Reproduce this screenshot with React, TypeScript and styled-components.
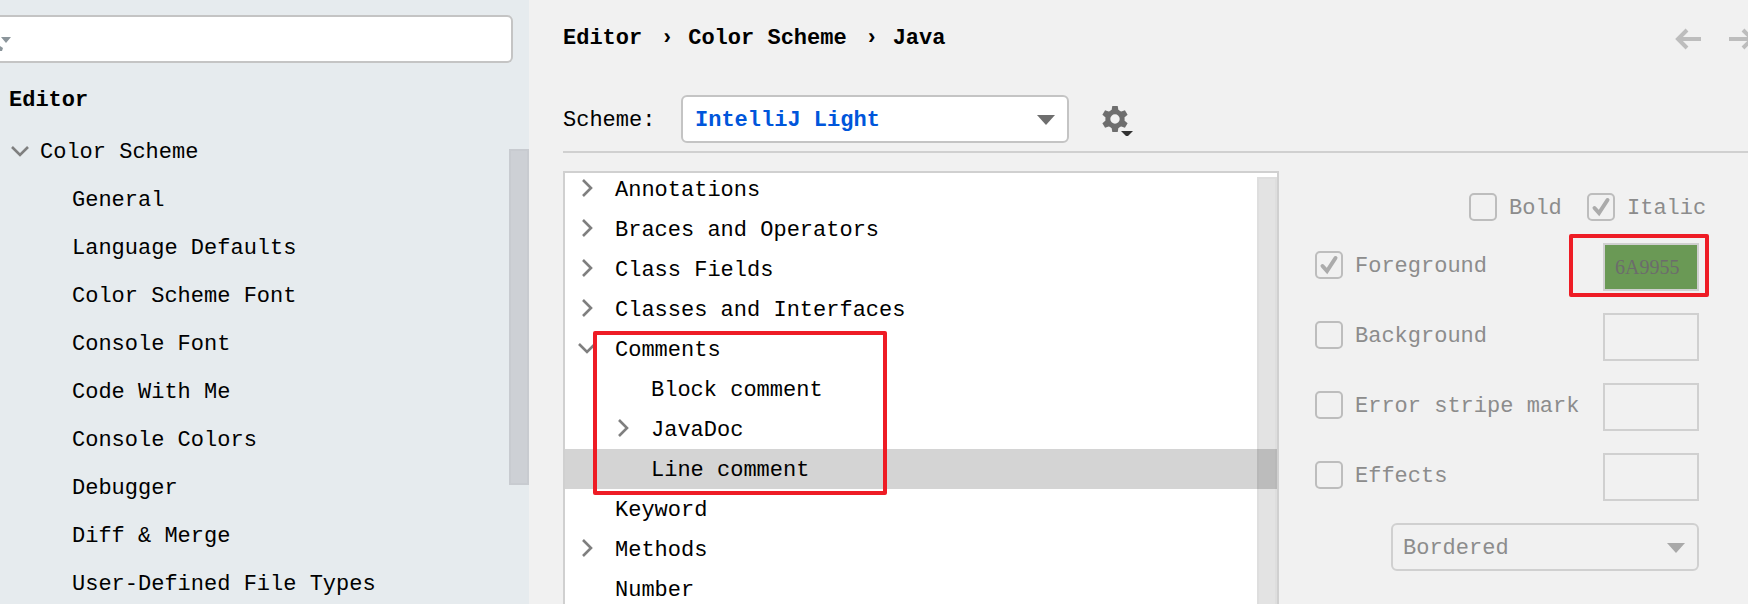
import React from "react";
import styled, { createGlobalStyle, css } from "styled-components";

const GlobalStyle = createGlobalStyle`
  *, *::before, *::after { box-sizing: border-box; }
  body {
    margin: 0;
    background: #f1f1f1;
    color: #000;
    font-family: "Liberation Mono", monospace;
    font-size: 22px;
    line-height: 28px;
  }
  button, input, select { font: inherit; color: inherit; }
`;

const Shell = styled.div`
  display: flex;
  height: 100vh;
  overflow: hidden;
`;

const Sidebar = styled.aside`
  flex: 0 0 529px;
  padding-top: 15px;
  background: #e6ebee;
  overflow: hidden;
`;

const SearchBox = styled.div`
  position: relative;
  margin-right: 16px;
`;

const SearchInput = styled.input`
  display: block;
  width: 100%;
  height: 48px;
  padding: 0 20px;
  border: 2px solid #c4c4c4;
  border-left: 0;
  border-radius: 0 6px 6px 0;
  background: #fff;
  outline: none;
`;

const SearchGlyph = styled.svg`
  position: absolute;
  left: 0;
  top: 20px;
`;

const SidebarHeading = styled.h2`
  margin: 14px 0 4px;
  padding-left: 9px;
  font-size: 22px;
  line-height: 48px;
`;

const SidebarTree = styled.nav`
  position: relative;
`;

const Thumb = styled.span`
  position: absolute;
  right: 0;
  top: 20px;
  width: 20px;
  height: 336px;
  border: 2px solid #c8cbd0;
  background: #cdd0d5;
`;

const SidebarItem = styled.button<{ $child?: boolean }>`
  display: flex;
  align-items: center;
  width: 100%;
  height: 48px;
  padding: 0 0 0 ${(p) => (p.$child ? 72 : 8)}px;
  border: 0;
  background: none;
  text-align: left;
  white-space: nowrap;
`;

const ChevronSvg = styled.svg`
  flex: none;
  width: 24px;
  height: 24px;
  margin-right: 8px;
`;

const Main = styled.main`
  flex: 1;
  min-width: 0;
  display: flex;
  flex-direction: column;
  padding: 25px 0 0 34px;
`;

const Header = styled.header`
  display: flex;
  justify-content: space-between;
  font-weight: bold;
`;

const Crumbs = styled.nav`
  display: flex;
  white-space: pre;
`;

const Separator = styled.span`
  width: 46px;
  padding-left: 4px;
  text-align: center;
`;

const History = styled.div`
  display: flex;
  align-items: center;
  gap: 28px;
  width: 73px;
  overflow: hidden;
`;

const IconButton = styled.button`
  flex: none;
  display: flex;
  padding: 0;
  border: 0;
  background: none;
`;

const SchemeRow = styled.div`
  display: flex;
  align-items: center;
  margin-top: 42px;
  padding-bottom: 8px;
  border-bottom: 2px solid #d0d0d0;
`;

const SchemeLabel = styled.label`
  width: 118px;
  padding-top: 4px;
`;

const SelectBox = styled.div<{ $width: number }>`
  position: relative;
  width: ${(p) => p.$width}px;
`;

const Select = styled.select`
  display: block;
  appearance: none;
  width: 100%;
  height: 48px;
  padding: 4px 48px 0 12px;
  border: 2px solid #c4c4c4;
  border-radius: 6px;
  background: #fff;
  color: #0056db;
  font-weight: bold;
  outline: none;
  &:disabled {
    padding-left: 10px;
    border-color: #d0d0d0;
    background: #f1f1f1;
    color: #8c8c8c;
    font-weight: normal;
    opacity: 1;
  }
`;

const SelectArrow = styled.svg`
  position: absolute;
  right: 14px;
  top: 20px;
  pointer-events: none;
`;

const GearButton = styled(IconButton)`
  margin-left: 32px;
`;

const Body = styled.div`
  flex: 1;
  min-height: 0;
  display: flex;
  align-items: stretch;
  margin-top: 18px;
`;

const TreePanel = styled.section`
  position: relative;
  flex: 1;
  min-width: 0;
  border: 2px solid #d0d0d0;
  border-bottom: 0;
  background: #fff;
  overflow: hidden;
`;

const TreeRows = styled.div`
  margin-top: -4px;
`;

const TreeGroup = styled.div`
  position: relative;
`;

const TreeItem = styled.button<{ $level: number; $selected: boolean }>`
  display: flex;
  align-items: center;
  width: 100%;
  height: 40px;
  padding: 4px 0 0 ${(p) => 10 + p.$level * 36}px;
  border: 0;
  background: ${(p) => (p.$selected ? "#d4d4d4" : "transparent")};
  text-align: left;
  white-space: nowrap;
`;

const ChevronSlot = styled.span`
  flex: none;
  display: flex;
  width: 40px;
  padding-bottom: 2px;
`;

const TreeScrollbar = styled.span`
  position: absolute;
  top: 4px;
  right: 0;
  bottom: 0;
  width: 20px;
  border: solid rgba(0, 0, 0, 0.02);
  border-width: 2px 2px 0 2px;
  background: rgba(0, 0, 0, 0.11);
`;

const marker = css`
  position: absolute;
  border: 4px solid #ee1c25;
  border-radius: 2px;
  pointer-events: none;
`;

const GroupMarker = styled.span`
  ${marker}
  left: 28px;
  top: 2px;
  width: 294px;
  bottom: -6px;
`;

const SwatchMarker = styled.span`
  ${marker}
  left: -34px;
  top: -9px;
  width: 140px;
  height: 63px;
`;

const Options = styled.form`
  flex: none;
  width: 384px;
  margin: 22px 49px 0 36px;
  color: #8c8c8c;
`;

const StyleRow = styled.div`
  display: flex;
  margin: 0 0 22px 154px;
`;

const OptionRow = styled.div`
  display: flex;
  justify-content: space-between;
  align-items: flex-start;
  height: 48px;
  margin-bottom: 22px;
`;

const CheckLabel = styled.label<{ $width?: number }>`
  flex: none;
  display: flex;
  align-items: center;
  gap: 12px;
  width: ${(p) => (p.$width ? `${p.$width}px` : "auto")};
  white-space: nowrap;
`;

const OptionLabel = styled(CheckLabel)`
  height: 44px;
`;

const LabelText = styled.span`
  height: 28px;
  line-height: 32px;
`;

const CheckMark = styled.span`
  flex: none;
  display: grid;
  width: 28px;
  height: 28px;
  & > * { grid-area: 1 / 1; }
`;

const CheckInput = styled.input`
  appearance: none;
  margin: 0;
  border: 2px solid #bdbdbd;
  border-radius: 5px;
`;

const SwatchBox = styled.div`
  position: relative;
  width: 96px;
`;

const Swatch = styled.input<{ $color?: string }>`
  display: block;
  width: 100%;
  height: 48px;
  padding: 0 0 0 10px;
  border: 2px solid #d0d0d0;
  border-radius: 0;
  background: ${(p) => p.$color ?? "transparent"};
  color: #6c6c6c;
  font-family: "Liberation Serif", serif;
  font-size: 20px;
`;

const EffectRow = styled.div`
  display: flex;
  justify-content: flex-end;
`;

function Chevron({ open }: { open?: boolean }) {
  return (
    <ChevronSvg viewBox="0 0 24 24" fill="none" stroke="#7f7f7f" strokeWidth="2.6" aria-hidden="true">
      <path d={open ? "M4 6l8 8 8-8" : "M8 2l8 8-8 8"} />
    </ChevronSvg>
  );
}

function ArrowIcon({ forward }: { forward?: boolean }) {
  return (
    <svg width="26" height="22" viewBox="0 0 26 22" fill="none" stroke="#bdbdbd" strokeWidth="4" aria-hidden="true">
      <path d={forward ? "M0 11h23M14 2l9 9-9 9" : "M26 11H3M12 2l-9 9 9 9"} />
    </svg>
  );
}

function GearIcon() {
  return (
    <svg width="34" height="34" viewBox="0 0 34 34" aria-hidden="true">
      <circle cx="14" cy="17" r="7.2" fill="none" stroke="#6e6e6e" strokeWidth="5" />
      {[0, 60, 120, 180, 240, 300].map((angle) => (
        <path key={angle} d="M11.3 4h5.400l1 6h-7.400z" fill="#6e6e6e" transform={`rotate(${angle} 14 17)`} />
      ))}
      <path d="M20 29h12l-6 6z" fill="#333" />
    </svg>
  );
}

function DropDown({ id, label, value, width, disabled }: {
  id: string;
  label?: string;
  value: string;
  width: number;
  disabled?: boolean;
}) {
  return (
    <SelectBox $width={width}>
      <Select id={id} aria-label={label} disabled={disabled} defaultValue={value}>
        <option>{value}</option>
      </Select>
      <SelectArrow width="18" height="10" viewBox="0 0 18 10" aria-hidden="true">
        <path d="M0 0h18l-9 10z" fill={disabled ? "#a9a9a9" : "#6e6e6e"} />
      </SelectArrow>
    </SelectBox>
  );
}

function Check({ id, checked }: { id: string; checked?: boolean }) {
  return (
    <CheckMark>
      <CheckInput type="checkbox" id={id} defaultChecked={checked} disabled />
      {checked && (
        <svg width="28" height="28" viewBox="0 0 28 28" fill="none" stroke="#ababab" strokeWidth="4" strokeLinecap="round" aria-hidden="true">
          <path d="M7.5 15l4.500 5L20.500 7" />
        </svg>
      )}
    </CheckMark>
  );
}

const pages = [
  "General",
  "Language Defaults",
  "Color Scheme Font",
  "Console Font",
  "Code With Me",
  "Console Colors",
  "Debugger",
  "Diff & Merge",
  "User-Defined File Types",
];

type Node = { name: string; level?: number; state?: "open" | "closed"; selected?: boolean };

const before: Node[] = [
  { name: "Annotations", state: "closed" },
  { name: "Braces and Operators", state: "closed" },
  { name: "Class Fields", state: "closed" },
  { name: "Classes and Interfaces", state: "closed" },
];

const comments: Node[] = [
  { name: "Comments", state: "open" },
  { name: "Block comment", level: 1 },
  { name: "JavaDoc", level: 1, state: "closed" },
  { name: "Line comment", level: 1, selected: true },
];

const after: Node[] = [
  { name: "Keyword" },
  { name: "Methods", state: "closed" },
  { name: "Number" },
];

const options = [
  { id: "foreground", name: "Foreground", checked: true, color: "#6A9955" },
  { id: "background", name: "Background" },
  { id: "stripe", name: "Error stripe mark" },
  { id: "effects", name: "Effects" },
];

function TreeNode({ name, level = 0, state, selected = false }: Node) {
  return (
    <TreeItem type="button" $level={level} $selected={selected}>
      <ChevronSlot>{state && <Chevron open={state === "open"} />}</ChevronSlot>
      {name}
    </TreeItem>
  );
}

export default function App() {
  return (
    <>
      <GlobalStyle />
      <Shell>
        <Sidebar>
          <SearchBox>
            <SearchInput type="text" aria-label="Search settings" />
            <SearchGlyph width="12" height="18" viewBox="0 0 12 18" aria-hidden="true">
              <path d="M1 2h10l-5 6zM0 11l3 2-1 3H0z" fill="#8b959b" />
            </SearchGlyph>
          </SearchBox>
          <SidebarHeading>Editor</SidebarHeading>
          <SidebarTree aria-label="Settings pages">
            <SidebarItem type="button">
              <Chevron open />
              Color Scheme
            </SidebarItem>
            {pages.map((page) => (
              <SidebarItem key={page} type="button" $child>
                {page}
              </SidebarItem>
            ))}
            <Thumb />
          </SidebarTree>
        </Sidebar>
        <Main>
          <Header>
            <Crumbs aria-label="Breadcrumb">
              <span>Editor</span>
              <Separator>›</Separator>
              <span>Color Scheme</span>
              <Separator>›</Separator>
              <span>Java</span>
            </Crumbs>
            <History>
              <IconButton type="button" aria-label="Back"><ArrowIcon /></IconButton>
              <IconButton type="button" aria-label="Forward"><ArrowIcon forward /></IconButton>
            </History>
          </Header>
          <SchemeRow>
            <SchemeLabel htmlFor="scheme">Scheme:</SchemeLabel>
            <DropDown id="scheme" value="IntelliJ Light" width={388} />
            <GearButton type="button" aria-label="Scheme actions"><GearIcon /></GearButton>
          </SchemeRow>
          <Body>
            <TreePanel>
              <TreeRows>
                {before.map((node) => <TreeNode key={node.name} {...node} />)}
                <TreeGroup>
                  {comments.map((node) => <TreeNode key={node.name} {...node} />)}
                  <GroupMarker />
                </TreeGroup>
                {after.map((node) => <TreeNode key={node.name} {...node} />)}
              </TreeRows>
              <TreeScrollbar />
            </TreePanel>
            <Options>
              <StyleRow>
                <CheckLabel htmlFor="bold" $width={118}>
                  <Check id="bold" />
                  <LabelText>Bold</LabelText>
                </CheckLabel>
                <CheckLabel htmlFor="italic">
                  <Check id="italic" checked />
                  <LabelText>Italic</LabelText>
                </CheckLabel>
              </StyleRow>
              {options.map(({ id, name, checked, color }) => (
                <OptionRow key={id}>
                  <OptionLabel htmlFor={id}>
                    <Check id={id} checked={checked} />
                    <LabelText>{name}</LabelText>
                  </OptionLabel>
                  <SwatchBox>
                    <Swatch
                      type="text"
                      aria-label={`${name} color`}
                      defaultValue={color?.slice(1)}
                      $color={color}
                      disabled
                    />
                    {color && <SwatchMarker />}
                  </SwatchBox>
                </OptionRow>
              ))}
              <EffectRow>
                <DropDown id="effect-type" label="Effect type" value="Bordered" width={308} disabled />
              </EffectRow>
            </Options>
          </Body>
        </Main>
      </Shell>
    </>
  );
}
